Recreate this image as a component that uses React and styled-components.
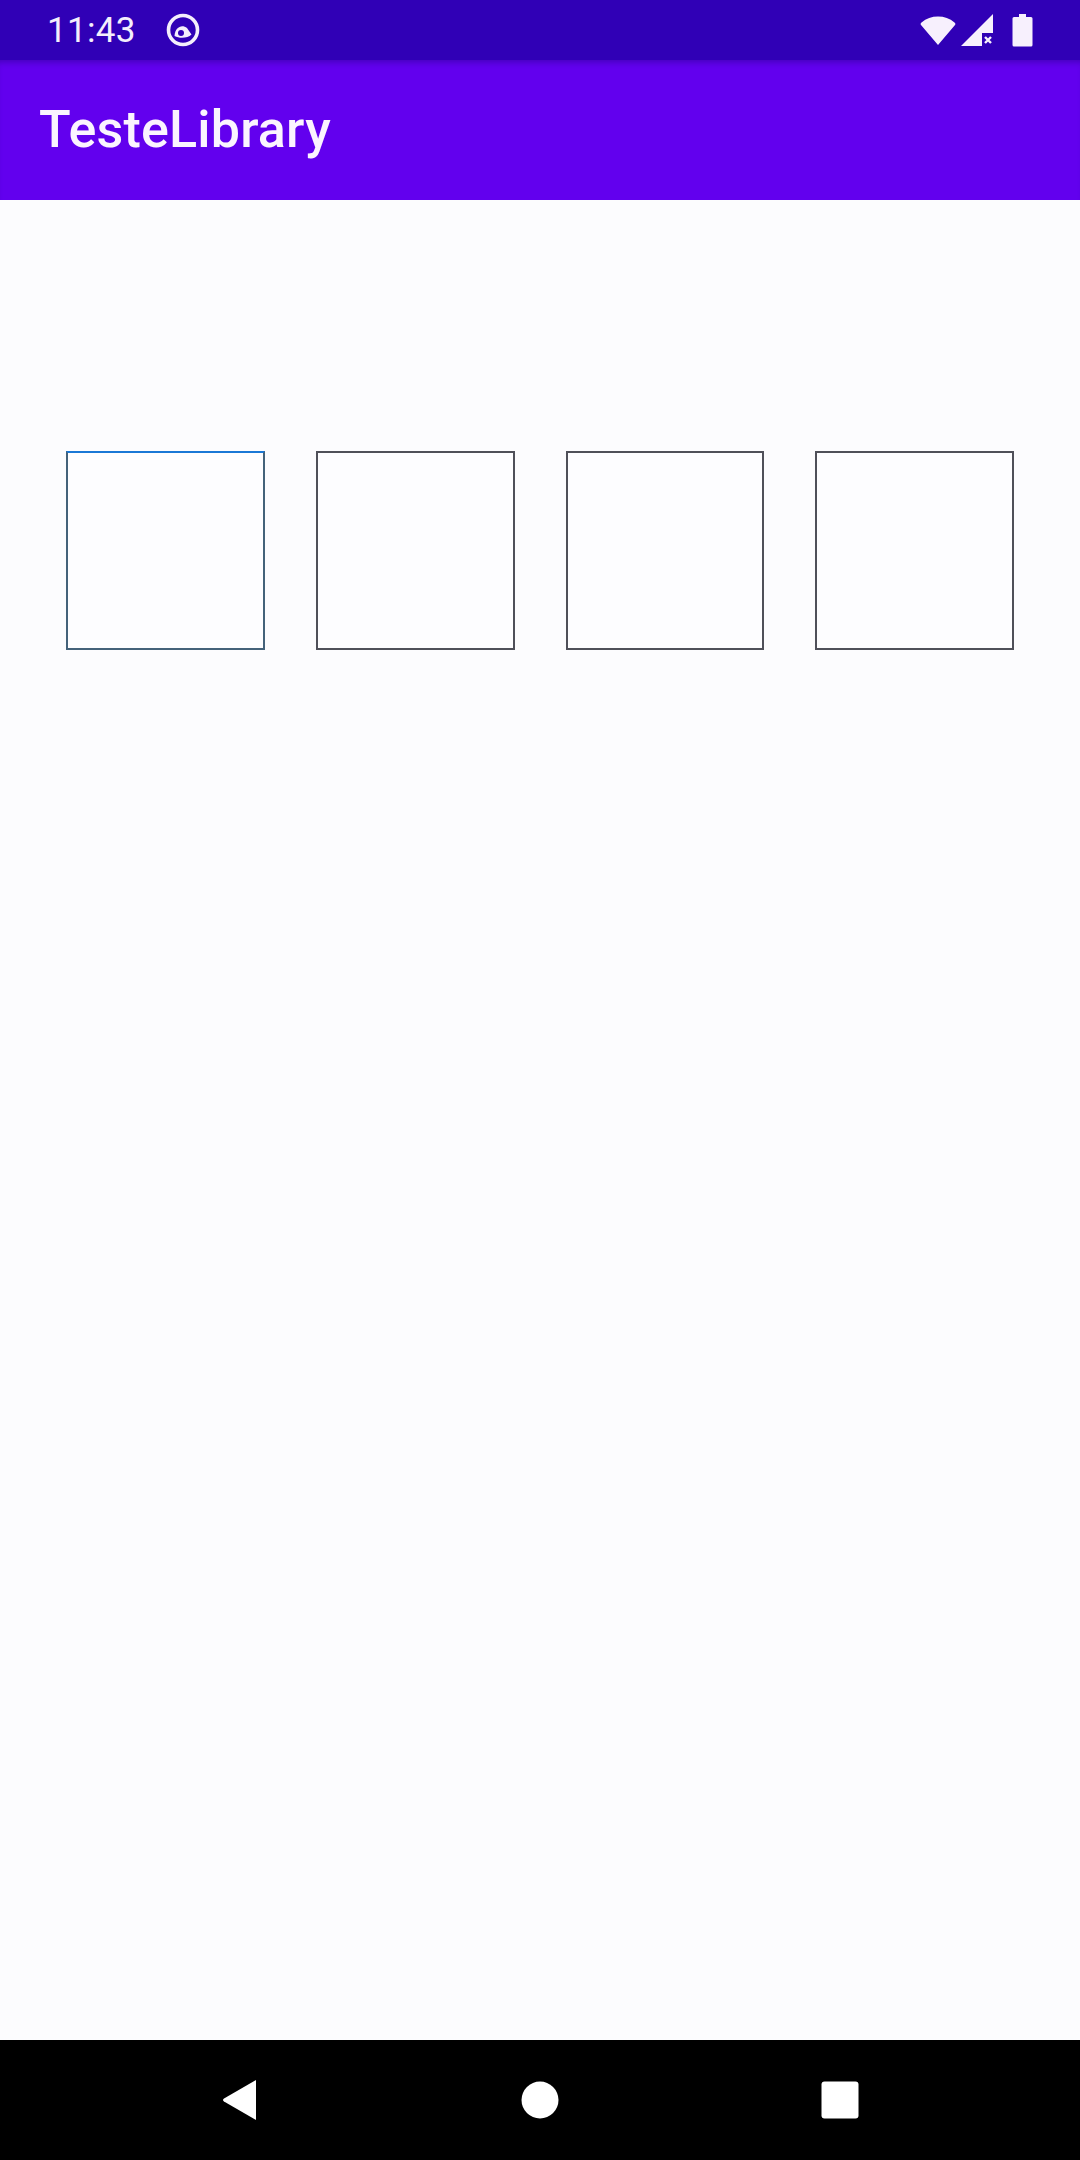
import React from "react";
import styled, { createGlobalStyle } from "styled-components";

const GlobalStyle = createGlobalStyle`
  html, body {
    margin: 0;
    padding: 0;
    background: #fcfcfe;
  }
  * { box-sizing: border-box; }
`;

const Screen = styled.div`
  width: 1080px;
  height: 2160px;
  display: flex;
  flex-direction: column;
  background: #fcfcfe;
  font-family: Roboto, "Noto Sans", sans-serif;
  overflow: hidden;
`;

const StatusBar = styled.div`
  height: 60px;
  flex: none;
  background: #3000b6;
  display: flex;
  align-items: center;
  padding: 0 47px 0 47px;
  color: #f4eefc;
`;

const Time = styled.span`
  font-size: 35px;
  font-weight: 400;
  letter-spacing: 0.3px;
  line-height: 1;
`;

const StatusLeft = styled.div`
  display: flex;
  align-items: center;
  gap: 30px;
`;

const StatusRight = styled.div`
  margin-left: auto;
  display: flex;
  align-items: center;
  gap: 6px;
`;

const Icon = styled.svg`
  display: block;
  flex: none;
  margin-left: ${(p) => p.$ml || 0}px;
`;

const AppBar = styled.header`
  height: 140px;
  flex: none;
  background: #6200ee;
  display: flex;
  align-items: center;
  padding-left: 39px;
  box-shadow: inset 0 6px 6px -4px rgba(30, 0, 120, 0.45);
`;

const Title = styled.h1`
  margin: 0;
  color: #fbf4ff;
  font-family: Roboto, sans-serif;
  font-size: 52px;
  font-weight: 500;
  letter-spacing: 0.2px;
  line-height: 1;
`;

const Content = styled.main`
  flex: 1;
  padding: 251px 66px 0 66px;
`;

const BoxRow = styled.div`
  display: flex;
  gap: 51px;
`;

const CodeBox = styled.div`
  width: 199px;
  height: 199px;
  background: #fdfdff;
  border: 2.5px solid ${(p) => (p.$focused ? "#44627a" : "#4f5059")};
  border-top-color: ${(p) => (p.$focused ? "#1a78d6" : "#4f5059")};
`;

const NavBar = styled.nav`
  height: 120px;
  flex: none;
  background: #000;
  display: flex;
  align-items: center;
  justify-content: center;
`;

const NavSlot = styled.div`
  width: 300px;
  display: flex;
  justify-content: center;
  align-items: center;
`;

export default function App() {
  return (
    <>
      <GlobalStyle />
      <Screen>
        <StatusBar>
          <StatusLeft>
            <Time>11:43</Time>
            <Icon width="34" height="36" viewBox="0 0 34 36">
              <circle cx="17" cy="18" r="14.5" fill="none" stroke="#f4eefc" strokeWidth="3.6" />
              <path d="M8.5 24 C9 15 16 12 21 16 L25.5 22.5 C22 26 14 27 8.5 24 Z" fill="#f4eefc" />
              <circle cx="15" cy="21" r="3" fill="#3000b6" />
            </Icon>
          </StatusLeft>
          <StatusRight>
            <Icon width="36" height="31" viewBox="0 0 36 31">
              <path d="M18 30 L1 10 Q0 8.5 1.5 7.5 A26 26 0 0 1 34.5 7.5 Q36 8.5 35 10 Z" fill="#f7f0fd" />
            </Icon>
            <Icon width="33" height="33" viewBox="0 0 33 33" $ml="-1">
              <path d="M0 32 L32 0 L32 19 L21 19 L21 32 Z" fill="#f7f0fd" />
              <path d="M24 23 L30 29 M30 23 L24 29" stroke="#f7f0fd" strokeWidth="2.4" />
            </Icon>
            <Icon width="21" height="33" viewBox="0 0 21 33" $ml="12">
              <path d="M7 0 H14 V3 H19 Q20.5 3 20.5 4.5 V31 Q20.5 32.5 19 32.5 H2 Q0.5 32.5 0.5 31 V4.5 Q0.5 3 2 3 H7 Z" fill="#f7f0fd" />
            </Icon>
          </StatusRight>
        </StatusBar>
        <AppBar>
          <Title>TesteLibrary</Title>
        </AppBar>
        <Content>
          <BoxRow>
            <CodeBox $focused />
            <CodeBox />
            <CodeBox />
            <CodeBox />
          </BoxRow>
        </Content>
        <NavBar>
          <NavSlot>
            <Icon width="36" height="42" viewBox="0 0 36 42">
              <path d="M34 1 L34 41 L2 22.5 Q0 21 2 19.5 Z" fill="#fff" />
            </Icon>
          </NavSlot>
          <NavSlot>
            <Icon width="38" height="38" viewBox="0 0 38 38">
              <circle cx="19" cy="19" r="18.5" fill="#fff" />
            </Icon>
          </NavSlot>
          <NavSlot>
            <Icon width="38" height="38" viewBox="0 0 38 38">
              <rect x="0.5" y="0.5" width="37" height="37" rx="3" fill="#fff" />
            </Icon>
          </NavSlot>
        </NavBar>
      </Screen>
    </>
  );
}
